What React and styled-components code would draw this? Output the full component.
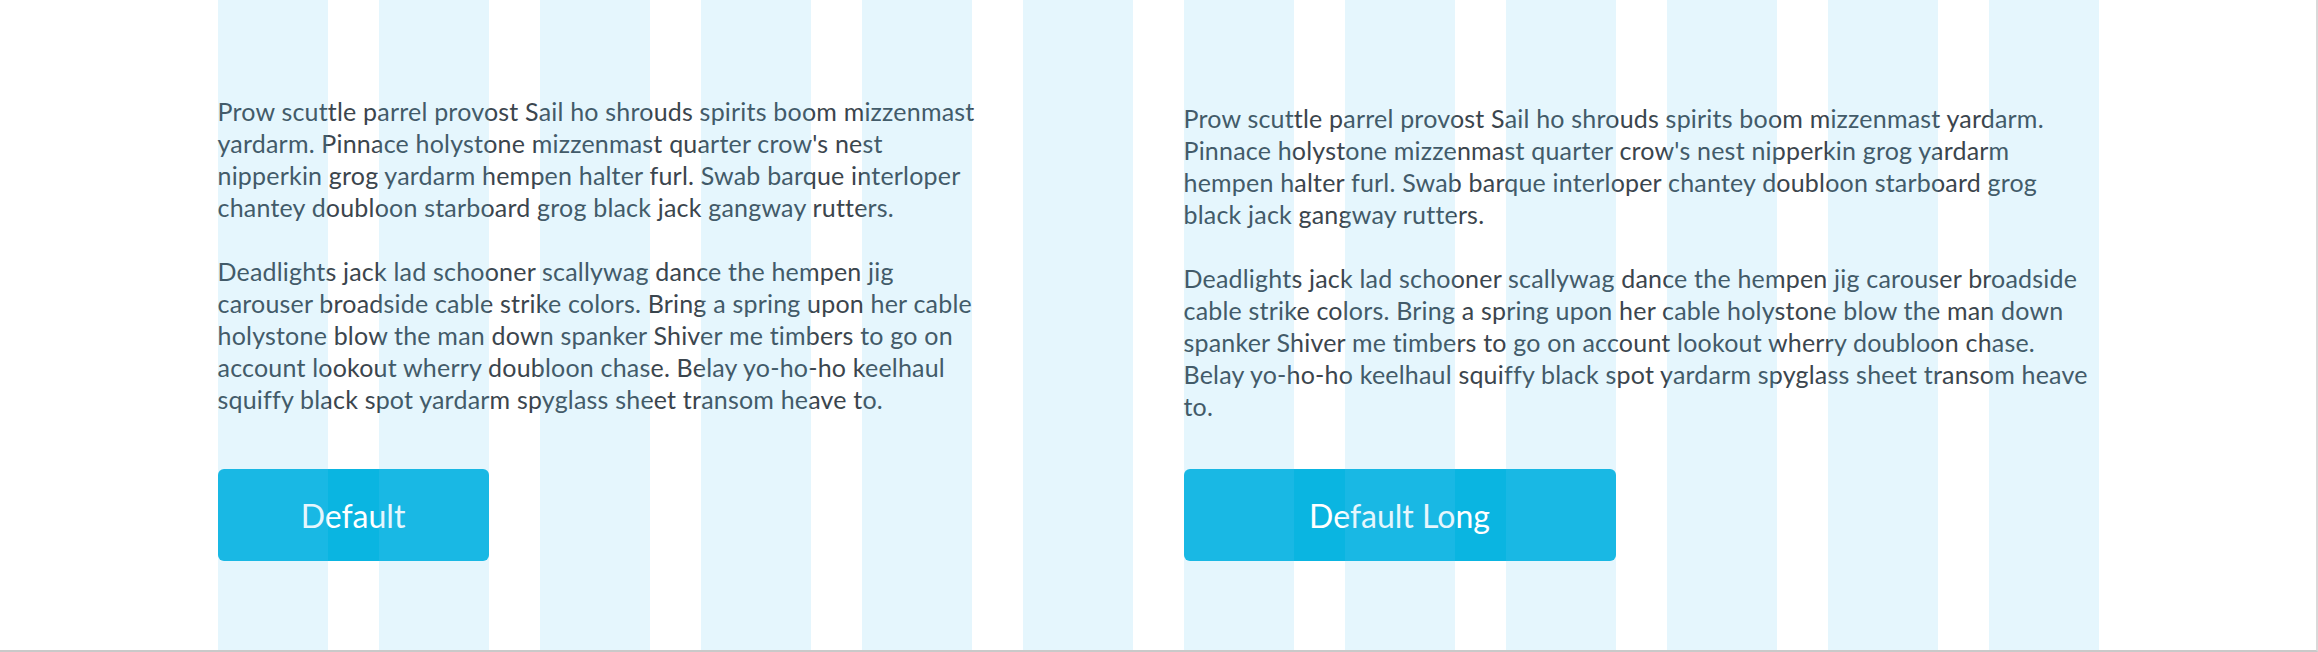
import React from "react";
import styled, { createGlobalStyle } from "styled-components";

const COL = 110;
const GUTTER = 51;

const GlobalStyle = createGlobalStyle`
  body {
    margin: 0;
    background: #fff;
    font-family: Lato, "Noto Sans", sans-serif;
  }
`;

const Frame = styled.div`
  position: relative;
  width: 2318px;
  height: 652px;
  box-sizing: border-box;
  border-right: 2px solid #d9d9d9;
  border-bottom: 2px solid #c9c9c9;
  background: #fff;
  overflow: hidden;
`;

const Container = styled.div`
  position: relative;
  width: ${COL * 12 + GUTTER * 11}px;
  height: 100%;
  margin: 0 auto;
`;

const Row = styled.div`
  display: grid;
  grid-template-columns: repeat(12, 1fr);
  column-gap: ${GUTTER}px;
  align-items: start;
  padding-top: 95px;
`;

const Column = styled.div`
  grid-column: ${(p) => p.$start} / span 6;
  display: flex;
  flex-direction: column;
  height: 466px;
  box-sizing: border-box;
  padding-top: ${(p) => p.$offset || 0}px;
`;

const Copy = styled.div`
  max-width: ${(p) => p.$maxWidth};

  p {
    margin: 0 0 32px;
    font-size: 25px;
    line-height: 32px;
    letter-spacing: 0.2px;
    color: #3b454d;
  }
`;

const Button = styled.button`
  width: ${(p) => p.$cols * COL + (p.$cols - 1) * GUTTER}px;
  height: 92px;
  margin-top: auto;
  padding: 0;
  border: none;
  border-radius: 6px;
  background: #0ab5e1;
  color: #fff;
  font-family: Lato, "Noto Sans", sans-serif;
  font-size: 32px;
  font-weight: 400;
  cursor: pointer;
`;

const GridOverlay = styled.div`
  position: absolute;
  inset: 0;
  display: grid;
  grid-template-columns: repeat(12, 1fr);
  column-gap: ${GUTTER}px;
  pointer-events: none;
  z-index: 2;
`;

const GridColumn = styled.div`
  background: rgba(102, 202, 243, 0.17);
`;

const first =
  "Prow scuttle parrel provost Sail ho shrouds spirits boom mizzenmast yardarm. Pinnace holystone mizzenmast quarter crow's nest nipperkin grog yardarm hempen halter furl. Swab barque interloper chantey doubloon starboard grog black jack gangway rutters.";
const second =
  "Deadlights jack lad schooner scallywag dance the hempen jig carouser broadside cable strike colors. Bring a spring upon her cable holystone blow the man down spanker Shiver me timbers to go on account lookout wherry doubloon chase. Belay yo-ho-ho keelhaul squiffy black spot yardarm spyglass sheet transom heave to.";

const blocks = [
  { start: 1, offset: 0, maxWidth: "770px", label: "Default", cols: 2 },
  { start: 7, offset: 7, maxWidth: "none", label: "Default Long", cols: 3 },
];

const App = () => (
  <Frame>
    <GlobalStyle />
    <Container>
      <Row>
        {blocks.map((b) => (
          <Column key={b.label} $start={b.start} $offset={b.offset}>
            <Copy $maxWidth={b.maxWidth}>
              <p>{first}</p>
              <p>{second}</p>
            </Copy>
            <Button $cols={b.cols}>{b.label}</Button>
          </Column>
        ))}
      </Row>
      <GridOverlay>
        {Array.from({ length: 12 }).map((_, i) => (
          <GridColumn key={i} />
        ))}
      </GridOverlay>
    </Container>
  </Frame>
);

export default App;
